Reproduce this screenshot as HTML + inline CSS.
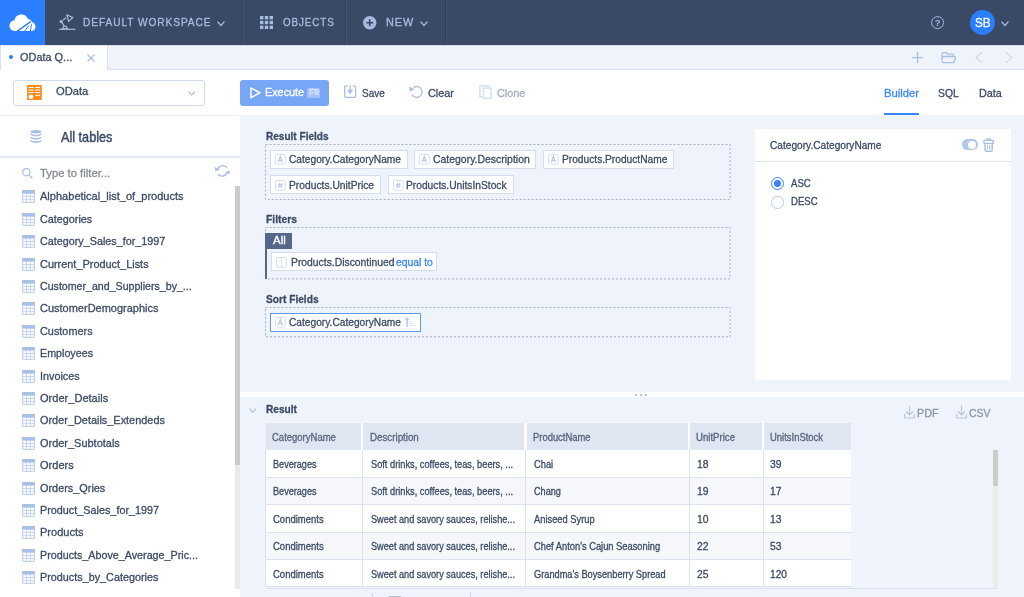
<!DOCTYPE html>
<html><head><meta charset="utf-8"><style>
html,body{margin:0;padding:0;width:1024px;height:597px;overflow:hidden;background:#fff;font-family:"Liberation Sans", sans-serif}
.t{position:absolute;white-space:nowrap;line-height:1;-webkit-font-smoothing:antialiased;-webkit-text-stroke-width:0.3px}
body{will-change:transform}
svg{overflow:visible}
</style></head><body>
<div style="position:absolute;left:0px;top:40px;width:1024.00px;height:31.00px;background:#eff3fa"></div>
<div style="position:absolute;left:0px;top:0px;width:1024.00px;height:44.80px;background:#3a4a66;box-shadow:0 0.6px 1.2px rgba(20,30,50,0.35)"></div>
<div style="position:absolute;left:0px;top:0px;width:44.80px;height:44.80px;background:#2b7fff"></div>
<svg style="position:absolute;left:9px;top:13px" width="28" height="20" viewBox="0 0 28 20"><path d="M6 18 C2 18 0.5 15 0.5 12.5 C0.5 9.5 3 7.5 5.5 7.5 C6 3.5 9 1.5 12.5 1.5 C15.5 1.5 18 3.5 19 6 C21 6 22.5 7.5 23 9 C25 9.5 26.5 11.5 26.5 14 C26.5 16.5 24.5 18 22.5 18 Z" fill="#fff"/><path d="M7.6 18.6 L21.8 8.6" stroke="#2b7fff" stroke-width="1.3"/><path d="M15.2 18.6 L19.8 12.6" stroke="#2b7fff" stroke-width="1"/><path d="M21.3 18.6 L22.6 11.2" stroke="#2b7fff" stroke-width="1"/></svg>
<div style="position:absolute;left:242.2px;top:0px;width:1.00px;height:44.80px;background:#34435c"></div>
<div style="position:absolute;left:243.2px;top:0px;width:1.00px;height:44.80px;background:#44536d"></div>
<div style="position:absolute;left:345.3px;top:0px;width:1.00px;height:44.80px;background:#34435c"></div>
<div style="position:absolute;left:346.3px;top:0px;width:1.00px;height:44.80px;background:#44536d"></div>
<div style="position:absolute;left:445.2px;top:0px;width:1.00px;height:44.80px;background:#34435c"></div>
<div style="position:absolute;left:446.2px;top:0px;width:1.00px;height:44.80px;background:#44536d"></div>
<svg style="position:absolute;left:58px;top:12px" width="19" height="19" viewBox="0 0 19 19"><g fill="none" stroke="#a6bbdf" stroke-width="1.2" stroke-linejoin="round"><path d="M0.9 17.3 H17.3"/><path d="M4.6 16.8 L5.8 14.2 H8.2 L9.4 16.8 Z"/><path d="M3.6 10 L6.2 13.8"/><path d="M5 7.9 L8 5.8"/><path d="M8.8 2.8 L14.8 5.6 L10.6 9.4 Z"/></g><circle cx="3.3" cy="9.6" r="1.7" fill="#a6bbdf"/></svg>
<div class="t" id="t0" style="left:83.4px;top:16.71px;font-size:11.8px;color:#a6bbdf;font-weight:normal;letter-spacing:1.100px;-webkit-text-stroke:0.35px #a6bbdf;transform:scaleX(0.8578);transform-origin:0 0">DEFAULT WORKSPACE</div>
<svg style="position:absolute;left:217px;top:20.5px" width="8" height="5.5" viewBox="0 0 8 5.5"><path d="M0.6 0.6 L4.0 4.5 L7.4 0.6" fill="none" stroke="#a6bbdf" stroke-width="1.3"/></svg>
<svg style="position:absolute;left:260px;top:15.7px" width="14" height="14" viewBox="0 0 14 14"><rect x="0.0" y="0.0" width="3.4" height="3.4" fill="#a6bbdf"/><rect x="0.0" y="4.8" width="3.4" height="3.4" fill="#a6bbdf"/><rect x="0.0" y="9.6" width="3.4" height="3.4" fill="#a6bbdf"/><rect x="4.8" y="0.0" width="3.4" height="3.4" fill="#a6bbdf"/><rect x="4.8" y="4.8" width="3.4" height="3.4" fill="#a6bbdf"/><rect x="4.8" y="9.6" width="3.4" height="3.4" fill="#a6bbdf"/><rect x="9.6" y="0.0" width="3.4" height="3.4" fill="#a6bbdf"/><rect x="9.6" y="4.8" width="3.4" height="3.4" fill="#a6bbdf"/><rect x="9.6" y="9.6" width="3.4" height="3.4" fill="#a6bbdf"/></svg>
<div class="t" id="t1" style="left:283px;top:16.71px;font-size:11.8px;color:#a6bbdf;font-weight:normal;letter-spacing:1.100px;-webkit-text-stroke:0.35px #a6bbdf;transform:scaleX(0.8316);transform-origin:0 0">OBJECTS</div>
<svg style="position:absolute;left:362.9px;top:16.4px" width="14" height="14" viewBox="0 0 14 14"><circle cx="6.75" cy="6.75" r="6.75" fill="#a6bbdf"/><path d="M6.75 3.3 V10.2 M3.3 6.75 H10.2" stroke="#3a4a66" stroke-width="1.6"/></svg>
<div class="t" id="t2" style="left:386px;top:16.71px;font-size:11.8px;color:#a6bbdf;font-weight:normal;letter-spacing:1.100px;-webkit-text-stroke:0.35px #a6bbdf;transform:scaleX(0.9206);transform-origin:0 0">NEW</div>
<svg style="position:absolute;left:420px;top:20.5px" width="8" height="5.5" viewBox="0 0 8 5.5"><path d="M0.6 0.6 L4.0 4.5 L7.4 0.6" fill="none" stroke="#a6bbdf" stroke-width="1.3"/></svg>
<svg style="position:absolute;left:931px;top:15.7px" width="14" height="14" viewBox="0 0 14 14"><circle cx="6.6" cy="6.6" r="6" fill="none" stroke="#a6bbdf" stroke-width="1"/><text x="6.6" y="10.2" font-size="9.5" font-weight="bold" text-anchor="middle" fill="#a6bbdf" font-family="Liberation Sans">?</text></svg>
<div style="position:absolute;left:969.8px;top:9.6px;width:25.4px;height:25.4px;border-radius:50%;background:#2b7fff"></div>
<div class="t" id="t3" style="left:974.6px;top:15.60px;font-size:13px;color:#fff;font-weight:normal;letter-spacing:0.000px;;transform:scaleX(0.9034);transform-origin:0 0">SB</div>
<svg style="position:absolute;left:1001px;top:20.8px" width="8" height="5.5" viewBox="0 0 8 5.5"><path d="M0.6 0.6 L4.0 4.5 L7.4 0.6" fill="none" stroke="#a6bbdf" stroke-width="1.3"/></svg>
<div style="position:absolute;left:0px;top:44.8px;width:1024.00px;height:25.60px;background:#eff3fa"></div>
<div style="position:absolute;left:0px;top:69px;width:1024.00px;height:1.40px;background:#d8e2f2"></div>
<div style="position:absolute;left:0px;top:44.8px;width:108.00px;height:25.80px;background:#fff;border-left:1px solid #d8e2f2;box-sizing:border-box;border-right:1.2px solid #d8e2f2"></div>
<div style="position:absolute;left:0px;top:44.8px;width:1024.00px;height:1.20px;background:linear-gradient(rgba(40,55,80,0.25),rgba(40,55,80,0))"></div>
<div style="position:absolute;left:8.8px;top:55.3px;width:4px;height:4px;border-radius:50%;background:#2b7fff"></div>
<div class="t" id="t4" style="left:20.2px;top:52.22px;font-size:11.2px;color:#3c4b66;font-weight:normal;letter-spacing:0.000px;;transform:scaleX(0.9763);transform-origin:0 0">OData Q...</div>
<svg style="position:absolute;left:86.5px;top:53.7px" width="8" height="8" viewBox="0 0 8 8"><path d="M0.5 0.5 L7.5 7.5 M7.5 0.5 L0.5 7.5" stroke="#a9bfe3" stroke-width="1.2"/></svg>
<svg style="position:absolute;left:911.9px;top:51.9px" width="11.2" height="11.2" viewBox="0 0 11.2 11.2"><path d="M5.6 0 V11.2 M0 5.6 H11.2" stroke="#a9bfe3" stroke-width="1.3"/></svg>
<svg style="position:absolute;left:940.9px;top:52px" width="15" height="11.5" viewBox="0 0 15 11.5"><path d="M1 2 Q1 0.7 2.3 0.7 H5.5 L7 2.2 H11.5 Q12.7 2.2 12.7 3.4 V4.5 M1 2 V9.5 Q1 10.7 2.3 10.7 H11.8 Q13 10.7 13.3 9.5 L14.3 5.7 Q14.4 4.5 13.2 4.5 H2.8 Q1.8 4.5 1.5 5.5" fill="none" stroke="#a9bfe3" stroke-width="1.3"/></svg>
<svg style="position:absolute;left:974.5px;top:51.9px" width="8" height="11.5" viewBox="0 0 8 11.5"><path d="M7 0.5 L1 5.6 L7 10.7" fill="none" stroke="#cbd7ec" stroke-width="1.1"/></svg>
<svg style="position:absolute;left:1005px;top:51.9px" width="8" height="11.5" viewBox="0 0 8 11.5"><path d="M1 0.5 L7 5.6 L1 10.7" fill="none" stroke="#cbd7ec" stroke-width="1.1"/></svg>
<div style="position:absolute;left:0px;top:70.4px;width:1024.00px;height:44.50px;background:#fff"></div>
<div style="position:absolute;left:12.9px;top:80.1px;width:191.70px;height:25.50px;border:1px solid #cfdaec;border-radius:3px;box-sizing:border-box;background:#fff"></div>
<svg style="position:absolute;left:27px;top:85px" width="14.8" height="15" viewBox="0 0 14.8 15"><rect x="0" y="0" width="14.8" height="15" fill="#ff8d1c"/><g stroke="#fff" stroke-width="1.05"><path d="M1.5 2.4 H6.75 M8.06 2.4 H13.07 M1.5 5 H6.75 M8.06 5 H13.07 M1.5 7.6 H6.75 M8.06 7.6 H13.07 M8.06 10.2 H13.07"/></g><circle cx="3.9" cy="11.8" r="2.4" fill="#fff"/><path d="M7.4 0 V15 M0 8.9 H14.8" stroke="#ff8d1c" stroke-width="0.6"/></svg>
<div class="t" id="t5" style="left:55.5px;top:86.32px;font-size:11.2px;color:#3c4b66;font-weight:normal;letter-spacing:0.000px;;transform:scaleX(0.9986);transform-origin:0 0">OData</div>
<svg style="position:absolute;left:187.5px;top:91px" width="7.5" height="5" viewBox="0 0 7.5 5"><path d="M0.6 0.6 L3.75 4 L6.9 0.6" fill="none" stroke="#a9bcdc" stroke-width="1.1"/></svg>
<div style="position:absolute;left:240px;top:80px;width:89.1px;height:25.7px;border-radius:3px;background:#78a6f7"></div>
<svg style="position:absolute;left:249.9px;top:87.3px" width="11" height="11.5" viewBox="0 0 11 11.5"><path d="M0.9 0.9 L9.9 5.75 L0.9 10.6 Z" fill="none" stroke="#fff" stroke-width="1.5" stroke-linejoin="round"/></svg>
<div class="t" id="t6" style="left:265.2px;top:87.42px;font-size:11.2px;color:#fff;font-weight:normal;letter-spacing:0.000px;;transform:scaleX(0.9669);transform-origin:0 0">Execute</div>
<div style="position:absolute;left:307.1px;top:87.9px;width:12.9px;height:9.7px;background:#a2c1fa;border-radius:1.5px"></div>
<div class="t" id="t7" style="left:309px;top:88.28px;font-size:9px;color:#d2e2fd;font-weight:bold;letter-spacing:0.000px;;transform:scaleX(0.9688);transform-origin:0 0">F9</div>
<svg style="position:absolute;left:344.2px;top:85.3px" width="13" height="13" viewBox="0 0 13 13"><path d="M3.6 0.9 H1.8 Q0.7 0.9 0.7 2 V11.3 Q0.7 12.4 1.8 12.4 H10.5 Q11.6 12.4 11.6 11.3 V2 Q11.6 0.9 10.5 0.9 H8.7" fill="none" stroke="#a9bfe3" stroke-width="1.3"/><path d="M6.1 0 V6" stroke="#a9bfe3" stroke-width="1.3"/><path d="M3 4.8 H9.2 L6.1 9.6 Z" fill="#a9bfe3"/></svg>
<div class="t" id="t8" style="left:362px;top:87.52px;font-size:11.2px;color:#3c4b66;font-weight:normal;letter-spacing:0.000px;;transform:scaleX(0.8924);transform-origin:0 0">Save</div>
<svg style="position:absolute;left:409px;top:84px" width="15" height="15" viewBox="0 0 15 15"><path d="M4.6 3.5 A5.4 5.4 0 1 1 3.0 10.6" fill="none" stroke="#a9bfe3" stroke-width="1.3"/><path d="M0.7 2.9 L0.9 7.2 L5 5.2 Z" fill="#a9bfe3" stroke="#a9bfe3" stroke-width="0.5" stroke-linejoin="round"/></svg>
<div class="t" id="t9" style="left:428px;top:87.52px;font-size:11.2px;color:#3c4b66;font-weight:normal;letter-spacing:0.000px;;transform:scaleX(0.9721);transform-origin:0 0">Clear</div>
<svg style="position:absolute;left:479px;top:84.8px" width="14" height="15" viewBox="0 0 14 15"><path d="M3.9 11.6 H0.9 V0.9 H9.2 V2.9" fill="none" stroke="#d3def0" stroke-width="1.4"/><rect x="4.4" y="3.1" width="7.7" height="10.2" fill="#fff" stroke="#d3def0" stroke-width="1.4"/></svg>
<div class="t" id="t10" style="left:497.1px;top:87.52px;font-size:11.2px;color:#a3adbf;font-weight:normal;letter-spacing:0.000px;;transform:scaleX(0.9713);transform-origin:0 0">Clone</div>
<div class="t" id="t11" style="left:884.3px;top:88.12px;font-size:11.2px;color:#3b86f5;font-weight:normal;letter-spacing:0.000px;;transform:scaleX(1.0051);transform-origin:0 0">Builder</div>
<div style="position:absolute;left:884px;top:113.3px;width:35.00px;height:2.00px;background:#3b86f5"></div>
<div class="t" id="t12" style="left:938.4px;top:88.12px;font-size:11.2px;color:#3c4b66;font-weight:normal;letter-spacing:0.000px;;transform:scaleX(0.9235);transform-origin:0 0">SQL</div>
<div class="t" id="t13" style="left:978.6px;top:88.12px;font-size:11.2px;color:#3c4b66;font-weight:normal;letter-spacing:0.000px;;transform:scaleX(0.9684);transform-origin:0 0">Data</div>
<div style="position:absolute;left:240px;top:114.9px;width:784.00px;height:482.10px;background:#eff3fb"></div>
<div style="position:absolute;left:0px;top:114.9px;width:240.00px;height:482.10px;background:#fff"></div>
<div style="position:absolute;left:0px;top:114.9px;width:240.00px;height:1.00px;background:#edf1f7"></div>
<svg style="position:absolute;left:29.6px;top:129.8px" width="12" height="14" viewBox="0 0 12 14"><g fill="#a9bfe3"><ellipse cx="5.9" cy="1.8" rx="5.6" ry="1.7"/><path d="M0.3 3.5 Q5.9 6.3 11.5 3.5 V5.1 Q5.9 7.9 0.3 5.1 Z"/><path d="M0.3 6.7 Q5.9 9.5 11.5 6.7 V8.3 Q5.9 11.1 0.3 8.3 Z"/><path d="M0.3 9.9 Q5.9 12.7 11.5 9.9 V11.5 Q5.9 14.3 0.3 11.5 Z"/></g></svg>
<div class="t" id="t14" style="left:61px;top:129.71px;font-size:14.4px;color:#3c4b66;font-weight:normal;letter-spacing:0.000px;-webkit-text-stroke-width:0.45px;transform:scaleX(0.8792);transform-origin:0 0">All tables</div>
<div style="position:absolute;left:0px;top:156.3px;width:240.00px;height:1.50px;background:#e3e9f3"></div>
<svg style="position:absolute;left:22px;top:168px" width="11" height="11" viewBox="0 0 11 11"><circle cx="4.3" cy="4.3" r="3.6" fill="none" stroke="#a9bfe3" stroke-width="1.2"/><path d="M7 7 L10.3 10.3" stroke="#a9bfe3" stroke-width="1.3"/></svg>
<div class="t" id="t15" style="left:40.2px;top:168.32px;font-size:11.2px;color:#868b94;font-weight:normal;letter-spacing:0.000px;;transform:scaleX(1.0080);transform-origin:0 0">Type to filter...</div>
<svg style="position:absolute;left:213px;top:162px" width="19" height="17" viewBox="0 0 19 17"><g fill="none" stroke="#a9bfe3" stroke-width="1.4"><path d="M13.9 5.6 A5.3 5.3 0 0 0 4.6 7.9"/><path d="M5 12.3 A5.3 5.3 0 0 0 14.1 10.2"/></g><g fill="#a9bfe3"><path d="M2 5 L2.3 9.8 L6.4 7.6 Z"/><path d="M12.3 10.9 L16.6 8.1 L16.8 12.1 Z"/></g></svg>
<svg style="position:absolute;left:22.3px;top:190.3px" width="13" height="13" viewBox="0 0 13 13"><rect x="0" y="0" width="13" height="13" rx="1.5" fill="#c2d3ef"/><rect x="0" y="0" width="13" height="3" rx="1" fill="#a9c0e6"/><rect x="1.2" y="4.0" width="2.8" height="2" fill="#fff"/><rect x="1.2" y="6.9" width="2.8" height="2" fill="#fff"/><rect x="1.2" y="9.8" width="2.8" height="2" fill="#fff"/><rect x="5.0" y="4.0" width="2.8" height="2" fill="#fff"/><rect x="5.0" y="6.9" width="2.8" height="2" fill="#fff"/><rect x="5.0" y="9.8" width="2.8" height="2" fill="#fff"/><rect x="8.799999999999999" y="4.0" width="2.8" height="2" fill="#fff"/><rect x="8.799999999999999" y="6.9" width="2.8" height="2" fill="#fff"/><rect x="8.799999999999999" y="9.8" width="2.8" height="2" fill="#fff"/></svg>
<div class="t" id="t16" style="left:40.2px;top:191.32px;font-size:11.2px;color:#3c4b66;font-weight:normal;letter-spacing:0.000px;;transform:scaleX(0.9868);transform-origin:0 0">Alphabetical_list_of_products</div>
<svg style="position:absolute;left:22.3px;top:212.70000000000002px" width="13" height="13" viewBox="0 0 13 13"><rect x="0" y="0" width="13" height="13" rx="1.5" fill="#c2d3ef"/><rect x="0" y="0" width="13" height="3" rx="1" fill="#a9c0e6"/><rect x="1.2" y="4.0" width="2.8" height="2" fill="#fff"/><rect x="1.2" y="6.9" width="2.8" height="2" fill="#fff"/><rect x="1.2" y="9.8" width="2.8" height="2" fill="#fff"/><rect x="5.0" y="4.0" width="2.8" height="2" fill="#fff"/><rect x="5.0" y="6.9" width="2.8" height="2" fill="#fff"/><rect x="5.0" y="9.8" width="2.8" height="2" fill="#fff"/><rect x="8.799999999999999" y="4.0" width="2.8" height="2" fill="#fff"/><rect x="8.799999999999999" y="6.9" width="2.8" height="2" fill="#fff"/><rect x="8.799999999999999" y="9.8" width="2.8" height="2" fill="#fff"/></svg>
<div class="t" id="t17" style="left:40.2px;top:213.72px;font-size:11.2px;color:#3c4b66;font-weight:normal;letter-spacing:0.000px;;transform:scaleX(0.9647);transform-origin:0 0">Categories</div>
<svg style="position:absolute;left:22.3px;top:235.10000000000002px" width="13" height="13" viewBox="0 0 13 13"><rect x="0" y="0" width="13" height="13" rx="1.5" fill="#c2d3ef"/><rect x="0" y="0" width="13" height="3" rx="1" fill="#a9c0e6"/><rect x="1.2" y="4.0" width="2.8" height="2" fill="#fff"/><rect x="1.2" y="6.9" width="2.8" height="2" fill="#fff"/><rect x="1.2" y="9.8" width="2.8" height="2" fill="#fff"/><rect x="5.0" y="4.0" width="2.8" height="2" fill="#fff"/><rect x="5.0" y="6.9" width="2.8" height="2" fill="#fff"/><rect x="5.0" y="9.8" width="2.8" height="2" fill="#fff"/><rect x="8.799999999999999" y="4.0" width="2.8" height="2" fill="#fff"/><rect x="8.799999999999999" y="6.9" width="2.8" height="2" fill="#fff"/><rect x="8.799999999999999" y="9.8" width="2.8" height="2" fill="#fff"/></svg>
<div class="t" id="t18" style="left:40.2px;top:236.12px;font-size:11.2px;color:#3c4b66;font-weight:normal;letter-spacing:0.000px;;transform:scaleX(0.9631);transform-origin:0 0">Category_Sales_for_1997</div>
<svg style="position:absolute;left:22.3px;top:257.5px" width="13" height="13" viewBox="0 0 13 13"><rect x="0" y="0" width="13" height="13" rx="1.5" fill="#c2d3ef"/><rect x="0" y="0" width="13" height="3" rx="1" fill="#a9c0e6"/><rect x="1.2" y="4.0" width="2.8" height="2" fill="#fff"/><rect x="1.2" y="6.9" width="2.8" height="2" fill="#fff"/><rect x="1.2" y="9.8" width="2.8" height="2" fill="#fff"/><rect x="5.0" y="4.0" width="2.8" height="2" fill="#fff"/><rect x="5.0" y="6.9" width="2.8" height="2" fill="#fff"/><rect x="5.0" y="9.8" width="2.8" height="2" fill="#fff"/><rect x="8.799999999999999" y="4.0" width="2.8" height="2" fill="#fff"/><rect x="8.799999999999999" y="6.9" width="2.8" height="2" fill="#fff"/><rect x="8.799999999999999" y="9.8" width="2.8" height="2" fill="#fff"/></svg>
<div class="t" id="t19" style="left:40.2px;top:258.52px;font-size:11.2px;color:#3c4b66;font-weight:normal;letter-spacing:0.000px;;transform:scaleX(0.9757);transform-origin:0 0">Current_Product_Lists</div>
<svg style="position:absolute;left:22.3px;top:279.9px" width="13" height="13" viewBox="0 0 13 13"><rect x="0" y="0" width="13" height="13" rx="1.5" fill="#c2d3ef"/><rect x="0" y="0" width="13" height="3" rx="1" fill="#a9c0e6"/><rect x="1.2" y="4.0" width="2.8" height="2" fill="#fff"/><rect x="1.2" y="6.9" width="2.8" height="2" fill="#fff"/><rect x="1.2" y="9.8" width="2.8" height="2" fill="#fff"/><rect x="5.0" y="4.0" width="2.8" height="2" fill="#fff"/><rect x="5.0" y="6.9" width="2.8" height="2" fill="#fff"/><rect x="5.0" y="9.8" width="2.8" height="2" fill="#fff"/><rect x="8.799999999999999" y="4.0" width="2.8" height="2" fill="#fff"/><rect x="8.799999999999999" y="6.9" width="2.8" height="2" fill="#fff"/><rect x="8.799999999999999" y="9.8" width="2.8" height="2" fill="#fff"/></svg>
<div class="t" id="t20" style="left:40.2px;top:280.92px;font-size:11.2px;color:#3c4b66;font-weight:normal;letter-spacing:0.000px;;transform:scaleX(0.9491);transform-origin:0 0">Customer_and_Suppliers_by_...</div>
<svg style="position:absolute;left:22.3px;top:302.3px" width="13" height="13" viewBox="0 0 13 13"><rect x="0" y="0" width="13" height="13" rx="1.5" fill="#c2d3ef"/><rect x="0" y="0" width="13" height="3" rx="1" fill="#a9c0e6"/><rect x="1.2" y="4.0" width="2.8" height="2" fill="#fff"/><rect x="1.2" y="6.9" width="2.8" height="2" fill="#fff"/><rect x="1.2" y="9.8" width="2.8" height="2" fill="#fff"/><rect x="5.0" y="4.0" width="2.8" height="2" fill="#fff"/><rect x="5.0" y="6.9" width="2.8" height="2" fill="#fff"/><rect x="5.0" y="9.8" width="2.8" height="2" fill="#fff"/><rect x="8.799999999999999" y="4.0" width="2.8" height="2" fill="#fff"/><rect x="8.799999999999999" y="6.9" width="2.8" height="2" fill="#fff"/><rect x="8.799999999999999" y="9.8" width="2.8" height="2" fill="#fff"/></svg>
<div class="t" id="t21" style="left:40.2px;top:303.32px;font-size:11.2px;color:#3c4b66;font-weight:normal;letter-spacing:0.000px;;transform:scaleX(0.9824);transform-origin:0 0">CustomerDemographics</div>
<svg style="position:absolute;left:22.3px;top:324.7px" width="13" height="13" viewBox="0 0 13 13"><rect x="0" y="0" width="13" height="13" rx="1.5" fill="#c2d3ef"/><rect x="0" y="0" width="13" height="3" rx="1" fill="#a9c0e6"/><rect x="1.2" y="4.0" width="2.8" height="2" fill="#fff"/><rect x="1.2" y="6.9" width="2.8" height="2" fill="#fff"/><rect x="1.2" y="9.8" width="2.8" height="2" fill="#fff"/><rect x="5.0" y="4.0" width="2.8" height="2" fill="#fff"/><rect x="5.0" y="6.9" width="2.8" height="2" fill="#fff"/><rect x="5.0" y="9.8" width="2.8" height="2" fill="#fff"/><rect x="8.799999999999999" y="4.0" width="2.8" height="2" fill="#fff"/><rect x="8.799999999999999" y="6.9" width="2.8" height="2" fill="#fff"/><rect x="8.799999999999999" y="9.8" width="2.8" height="2" fill="#fff"/></svg>
<div class="t" id="t22" style="left:40.2px;top:325.72px;font-size:11.2px;color:#3c4b66;font-weight:normal;letter-spacing:0.000px;;transform:scaleX(0.9724);transform-origin:0 0">Customers</div>
<svg style="position:absolute;left:22.3px;top:347.1px" width="13" height="13" viewBox="0 0 13 13"><rect x="0" y="0" width="13" height="13" rx="1.5" fill="#c2d3ef"/><rect x="0" y="0" width="13" height="3" rx="1" fill="#a9c0e6"/><rect x="1.2" y="4.0" width="2.8" height="2" fill="#fff"/><rect x="1.2" y="6.9" width="2.8" height="2" fill="#fff"/><rect x="1.2" y="9.8" width="2.8" height="2" fill="#fff"/><rect x="5.0" y="4.0" width="2.8" height="2" fill="#fff"/><rect x="5.0" y="6.9" width="2.8" height="2" fill="#fff"/><rect x="5.0" y="9.8" width="2.8" height="2" fill="#fff"/><rect x="8.799999999999999" y="4.0" width="2.8" height="2" fill="#fff"/><rect x="8.799999999999999" y="6.9" width="2.8" height="2" fill="#fff"/><rect x="8.799999999999999" y="9.8" width="2.8" height="2" fill="#fff"/></svg>
<div class="t" id="t23" style="left:40.2px;top:348.12px;font-size:11.2px;color:#3c4b66;font-weight:normal;letter-spacing:0.000px;;transform:scaleX(0.9576);transform-origin:0 0">Employees</div>
<svg style="position:absolute;left:22.3px;top:369.5px" width="13" height="13" viewBox="0 0 13 13"><rect x="0" y="0" width="13" height="13" rx="1.5" fill="#c2d3ef"/><rect x="0" y="0" width="13" height="3" rx="1" fill="#a9c0e6"/><rect x="1.2" y="4.0" width="2.8" height="2" fill="#fff"/><rect x="1.2" y="6.9" width="2.8" height="2" fill="#fff"/><rect x="1.2" y="9.8" width="2.8" height="2" fill="#fff"/><rect x="5.0" y="4.0" width="2.8" height="2" fill="#fff"/><rect x="5.0" y="6.9" width="2.8" height="2" fill="#fff"/><rect x="5.0" y="9.8" width="2.8" height="2" fill="#fff"/><rect x="8.799999999999999" y="4.0" width="2.8" height="2" fill="#fff"/><rect x="8.799999999999999" y="6.9" width="2.8" height="2" fill="#fff"/><rect x="8.799999999999999" y="9.8" width="2.8" height="2" fill="#fff"/></svg>
<div class="t" id="t24" style="left:40.2px;top:370.52px;font-size:11.2px;color:#3c4b66;font-weight:normal;letter-spacing:0.000px;;transform:scaleX(0.9672);transform-origin:0 0">Invoices</div>
<svg style="position:absolute;left:22.3px;top:391.9px" width="13" height="13" viewBox="0 0 13 13"><rect x="0" y="0" width="13" height="13" rx="1.5" fill="#c2d3ef"/><rect x="0" y="0" width="13" height="3" rx="1" fill="#a9c0e6"/><rect x="1.2" y="4.0" width="2.8" height="2" fill="#fff"/><rect x="1.2" y="6.9" width="2.8" height="2" fill="#fff"/><rect x="1.2" y="9.8" width="2.8" height="2" fill="#fff"/><rect x="5.0" y="4.0" width="2.8" height="2" fill="#fff"/><rect x="5.0" y="6.9" width="2.8" height="2" fill="#fff"/><rect x="5.0" y="9.8" width="2.8" height="2" fill="#fff"/><rect x="8.799999999999999" y="4.0" width="2.8" height="2" fill="#fff"/><rect x="8.799999999999999" y="6.9" width="2.8" height="2" fill="#fff"/><rect x="8.799999999999999" y="9.8" width="2.8" height="2" fill="#fff"/></svg>
<div class="t" id="t25" style="left:40.2px;top:392.92px;font-size:11.2px;color:#3c4b66;font-weight:normal;letter-spacing:0.000px;;transform:scaleX(0.9883);transform-origin:0 0">Order_Details</div>
<svg style="position:absolute;left:22.3px;top:414.3px" width="13" height="13" viewBox="0 0 13 13"><rect x="0" y="0" width="13" height="13" rx="1.5" fill="#c2d3ef"/><rect x="0" y="0" width="13" height="3" rx="1" fill="#a9c0e6"/><rect x="1.2" y="4.0" width="2.8" height="2" fill="#fff"/><rect x="1.2" y="6.9" width="2.8" height="2" fill="#fff"/><rect x="1.2" y="9.8" width="2.8" height="2" fill="#fff"/><rect x="5.0" y="4.0" width="2.8" height="2" fill="#fff"/><rect x="5.0" y="6.9" width="2.8" height="2" fill="#fff"/><rect x="5.0" y="9.8" width="2.8" height="2" fill="#fff"/><rect x="8.799999999999999" y="4.0" width="2.8" height="2" fill="#fff"/><rect x="8.799999999999999" y="6.9" width="2.8" height="2" fill="#fff"/><rect x="8.799999999999999" y="9.8" width="2.8" height="2" fill="#fff"/></svg>
<div class="t" id="t26" style="left:40.2px;top:415.32px;font-size:11.2px;color:#3c4b66;font-weight:normal;letter-spacing:0.000px;;transform:scaleX(0.9750);transform-origin:0 0">Order_Details_Extendeds</div>
<svg style="position:absolute;left:22.3px;top:436.7px" width="13" height="13" viewBox="0 0 13 13"><rect x="0" y="0" width="13" height="13" rx="1.5" fill="#c2d3ef"/><rect x="0" y="0" width="13" height="3" rx="1" fill="#a9c0e6"/><rect x="1.2" y="4.0" width="2.8" height="2" fill="#fff"/><rect x="1.2" y="6.9" width="2.8" height="2" fill="#fff"/><rect x="1.2" y="9.8" width="2.8" height="2" fill="#fff"/><rect x="5.0" y="4.0" width="2.8" height="2" fill="#fff"/><rect x="5.0" y="6.9" width="2.8" height="2" fill="#fff"/><rect x="5.0" y="9.8" width="2.8" height="2" fill="#fff"/><rect x="8.799999999999999" y="4.0" width="2.8" height="2" fill="#fff"/><rect x="8.799999999999999" y="6.9" width="2.8" height="2" fill="#fff"/><rect x="8.799999999999999" y="9.8" width="2.8" height="2" fill="#fff"/></svg>
<div class="t" id="t27" style="left:40.2px;top:437.72px;font-size:11.2px;color:#3c4b66;font-weight:normal;letter-spacing:0.000px;;transform:scaleX(0.9796);transform-origin:0 0">Order_Subtotals</div>
<svg style="position:absolute;left:22.3px;top:459.09999999999997px" width="13" height="13" viewBox="0 0 13 13"><rect x="0" y="0" width="13" height="13" rx="1.5" fill="#c2d3ef"/><rect x="0" y="0" width="13" height="3" rx="1" fill="#a9c0e6"/><rect x="1.2" y="4.0" width="2.8" height="2" fill="#fff"/><rect x="1.2" y="6.9" width="2.8" height="2" fill="#fff"/><rect x="1.2" y="9.8" width="2.8" height="2" fill="#fff"/><rect x="5.0" y="4.0" width="2.8" height="2" fill="#fff"/><rect x="5.0" y="6.9" width="2.8" height="2" fill="#fff"/><rect x="5.0" y="9.8" width="2.8" height="2" fill="#fff"/><rect x="8.799999999999999" y="4.0" width="2.8" height="2" fill="#fff"/><rect x="8.799999999999999" y="6.9" width="2.8" height="2" fill="#fff"/><rect x="8.799999999999999" y="9.8" width="2.8" height="2" fill="#fff"/></svg>
<div class="t" id="t28" style="left:40.2px;top:460.12px;font-size:11.2px;color:#3c4b66;font-weight:normal;letter-spacing:0.000px;;transform:scaleX(0.9855);transform-origin:0 0">Orders</div>
<svg style="position:absolute;left:22.3px;top:481.5px" width="13" height="13" viewBox="0 0 13 13"><rect x="0" y="0" width="13" height="13" rx="1.5" fill="#c2d3ef"/><rect x="0" y="0" width="13" height="3" rx="1" fill="#a9c0e6"/><rect x="1.2" y="4.0" width="2.8" height="2" fill="#fff"/><rect x="1.2" y="6.9" width="2.8" height="2" fill="#fff"/><rect x="1.2" y="9.8" width="2.8" height="2" fill="#fff"/><rect x="5.0" y="4.0" width="2.8" height="2" fill="#fff"/><rect x="5.0" y="6.9" width="2.8" height="2" fill="#fff"/><rect x="5.0" y="9.8" width="2.8" height="2" fill="#fff"/><rect x="8.799999999999999" y="4.0" width="2.8" height="2" fill="#fff"/><rect x="8.799999999999999" y="6.9" width="2.8" height="2" fill="#fff"/><rect x="8.799999999999999" y="9.8" width="2.8" height="2" fill="#fff"/></svg>
<div class="t" id="t29" style="left:40.2px;top:482.52px;font-size:11.2px;color:#3c4b66;font-weight:normal;letter-spacing:0.000px;;transform:scaleX(0.9724);transform-origin:0 0">Orders_Qries</div>
<svg style="position:absolute;left:22.3px;top:503.9px" width="13" height="13" viewBox="0 0 13 13"><rect x="0" y="0" width="13" height="13" rx="1.5" fill="#c2d3ef"/><rect x="0" y="0" width="13" height="3" rx="1" fill="#a9c0e6"/><rect x="1.2" y="4.0" width="2.8" height="2" fill="#fff"/><rect x="1.2" y="6.9" width="2.8" height="2" fill="#fff"/><rect x="1.2" y="9.8" width="2.8" height="2" fill="#fff"/><rect x="5.0" y="4.0" width="2.8" height="2" fill="#fff"/><rect x="5.0" y="6.9" width="2.8" height="2" fill="#fff"/><rect x="5.0" y="9.8" width="2.8" height="2" fill="#fff"/><rect x="8.799999999999999" y="4.0" width="2.8" height="2" fill="#fff"/><rect x="8.799999999999999" y="6.9" width="2.8" height="2" fill="#fff"/><rect x="8.799999999999999" y="9.8" width="2.8" height="2" fill="#fff"/></svg>
<div class="t" id="t30" style="left:40.2px;top:504.92px;font-size:11.2px;color:#3c4b66;font-weight:normal;letter-spacing:0.000px;;transform:scaleX(0.9671);transform-origin:0 0">Product_Sales_for_1997</div>
<svg style="position:absolute;left:22.3px;top:526.3px" width="13" height="13" viewBox="0 0 13 13"><rect x="0" y="0" width="13" height="13" rx="1.5" fill="#c2d3ef"/><rect x="0" y="0" width="13" height="3" rx="1" fill="#a9c0e6"/><rect x="1.2" y="4.0" width="2.8" height="2" fill="#fff"/><rect x="1.2" y="6.9" width="2.8" height="2" fill="#fff"/><rect x="1.2" y="9.8" width="2.8" height="2" fill="#fff"/><rect x="5.0" y="4.0" width="2.8" height="2" fill="#fff"/><rect x="5.0" y="6.9" width="2.8" height="2" fill="#fff"/><rect x="5.0" y="9.8" width="2.8" height="2" fill="#fff"/><rect x="8.799999999999999" y="4.0" width="2.8" height="2" fill="#fff"/><rect x="8.799999999999999" y="6.9" width="2.8" height="2" fill="#fff"/><rect x="8.799999999999999" y="9.8" width="2.8" height="2" fill="#fff"/></svg>
<div class="t" id="t31" style="left:40.2px;top:527.32px;font-size:11.2px;color:#3c4b66;font-weight:normal;letter-spacing:0.000px;;transform:scaleX(0.9853);transform-origin:0 0">Products</div>
<svg style="position:absolute;left:22.3px;top:548.7px" width="13" height="13" viewBox="0 0 13 13"><rect x="0" y="0" width="13" height="13" rx="1.5" fill="#c2d3ef"/><rect x="0" y="0" width="13" height="3" rx="1" fill="#a9c0e6"/><rect x="1.2" y="4.0" width="2.8" height="2" fill="#fff"/><rect x="1.2" y="6.9" width="2.8" height="2" fill="#fff"/><rect x="1.2" y="9.8" width="2.8" height="2" fill="#fff"/><rect x="5.0" y="4.0" width="2.8" height="2" fill="#fff"/><rect x="5.0" y="6.9" width="2.8" height="2" fill="#fff"/><rect x="5.0" y="9.8" width="2.8" height="2" fill="#fff"/><rect x="8.799999999999999" y="4.0" width="2.8" height="2" fill="#fff"/><rect x="8.799999999999999" y="6.9" width="2.8" height="2" fill="#fff"/><rect x="8.799999999999999" y="9.8" width="2.8" height="2" fill="#fff"/></svg>
<div class="t" id="t32" style="left:40.2px;top:549.72px;font-size:11.2px;color:#3c4b66;font-weight:normal;letter-spacing:0.000px;;transform:scaleX(0.9598);transform-origin:0 0">Products_Above_Average_Pric...</div>
<svg style="position:absolute;left:22.3px;top:571.0999999999999px" width="13" height="13" viewBox="0 0 13 13"><rect x="0" y="0" width="13" height="13" rx="1.5" fill="#c2d3ef"/><rect x="0" y="0" width="13" height="3" rx="1" fill="#a9c0e6"/><rect x="1.2" y="4.0" width="2.8" height="2" fill="#fff"/><rect x="1.2" y="6.9" width="2.8" height="2" fill="#fff"/><rect x="1.2" y="9.8" width="2.8" height="2" fill="#fff"/><rect x="5.0" y="4.0" width="2.8" height="2" fill="#fff"/><rect x="5.0" y="6.9" width="2.8" height="2" fill="#fff"/><rect x="5.0" y="9.8" width="2.8" height="2" fill="#fff"/><rect x="8.799999999999999" y="4.0" width="2.8" height="2" fill="#fff"/><rect x="8.799999999999999" y="6.9" width="2.8" height="2" fill="#fff"/><rect x="8.799999999999999" y="9.8" width="2.8" height="2" fill="#fff"/></svg>
<div class="t" id="t33" style="left:40.2px;top:572.12px;font-size:11.2px;color:#3c4b66;font-weight:normal;letter-spacing:0.000px;;transform:scaleX(0.9664);transform-origin:0 0">Products_by_Categories</div>
<div style="position:absolute;left:235px;top:185.7px;width:5.30px;height:403.00px;background:#ebebeb"></div>
<div style="position:absolute;left:235px;top:185.7px;width:5.30px;height:279.30px;background:#cccccc"></div>
<div class="t" id="t34" style="left:265.9px;top:131.12px;font-size:11.2px;color:#3c4b66;font-weight:bold;letter-spacing:0.000px;;transform:scaleX(0.8985);transform-origin:0 0">Result Fields</div>
<svg style="position:absolute;left:265.2px;top:144.0px" width="465.59999999999997" height="56.000000000000014" viewBox="0 0 465.59999999999997 56.000000000000014"><rect x="0.5" y="0.5" width="464.60" height="55.00" fill="none" stroke="#a2b0c7" stroke-width="1" stroke-dasharray="2 2"/></svg>
<div style="position:absolute;left:270.3px;top:149.5px;width:137.40px;height:19.60px;background:#fff;border:1px solid #d4ddec;box-sizing:border-box"></div>
<svg style="position:absolute;left:275.3px;top:154.10000000000002px" width="10.7" height="10.5" viewBox="0 0 10.7 10.5"><rect x="0.5" y="0.5" width="9.7" height="9.7" rx="1.3" fill="none" stroke="#d6dfee" stroke-width="1"/><path d="M3.2 8.2 L5.35 2.4 L7.5 8.2 M3.9 6.4 H6.8" fill="none" stroke="#b5c7e6" stroke-width="1.1"/></svg>
<div class="t" id="t35" style="left:289.0px;top:153.82px;font-size:11.2px;color:#3c4b66;font-weight:normal;letter-spacing:0.000px;;transform:scaleX(0.9109);transform-origin:0 0">Category.CategoryName</div>
<div style="position:absolute;left:414.3px;top:149.5px;width:122.20px;height:19.60px;background:#fff;border:1px solid #d4ddec;box-sizing:border-box"></div>
<svg style="position:absolute;left:419.3px;top:154.10000000000002px" width="10.7" height="10.5" viewBox="0 0 10.7 10.5"><rect x="0.5" y="0.5" width="9.7" height="9.7" rx="1.3" fill="none" stroke="#d6dfee" stroke-width="1"/><path d="M3.2 8.2 L5.35 2.4 L7.5 8.2 M3.9 6.4 H6.8" fill="none" stroke="#b5c7e6" stroke-width="1.1"/></svg>
<div class="t" id="t36" style="left:433.0px;top:153.82px;font-size:11.2px;color:#3c4b66;font-weight:normal;letter-spacing:0.000px;;transform:scaleX(0.9337);transform-origin:0 0">Category.Description</div>
<div style="position:absolute;left:543.4px;top:149.5px;width:130.80px;height:19.60px;background:#fff;border:1px solid #d4ddec;box-sizing:border-box"></div>
<svg style="position:absolute;left:548.4px;top:154.10000000000002px" width="10.7" height="10.5" viewBox="0 0 10.7 10.5"><rect x="0.5" y="0.5" width="9.7" height="9.7" rx="1.3" fill="none" stroke="#d6dfee" stroke-width="1"/><path d="M3.2 8.2 L5.35 2.4 L7.5 8.2 M3.9 6.4 H6.8" fill="none" stroke="#b5c7e6" stroke-width="1.1"/></svg>
<div class="t" id="t37" style="left:562.1px;top:153.82px;font-size:11.2px;color:#3c4b66;font-weight:normal;letter-spacing:0.000px;;transform:scaleX(0.9111);transform-origin:0 0">Products.ProductName</div>
<div style="position:absolute;left:270.3px;top:175.3px;width:110.50px;height:19.20px;background:#fff;border:1px solid #d4ddec;box-sizing:border-box"></div>
<svg style="position:absolute;left:275.3px;top:179.70000000000002px" width="10.7" height="10.5" viewBox="0 0 10.7 10.5"><rect x="0.5" y="0.5" width="9.7" height="9.7" rx="1.3" fill="none" stroke="#d6dfee" stroke-width="1"/><path d="M4.6 2.8 L4 7.8 M6.7 2.8 L6.1 7.8 M3.2 4.5 H7.6 M3 6.2 H7.4" fill="none" stroke="#b5c7e6" stroke-width="0.9"/></svg>
<div class="t" id="t38" style="left:289.0px;top:179.62px;font-size:11.2px;color:#3c4b66;font-weight:normal;letter-spacing:0.000px;;transform:scaleX(0.9181);transform-origin:0 0">Products.UnitPrice</div>
<div style="position:absolute;left:387.5px;top:175.3px;width:126.00px;height:19.20px;background:#fff;border:1px solid #d4ddec;box-sizing:border-box"></div>
<svg style="position:absolute;left:392.5px;top:179.70000000000002px" width="10.7" height="10.5" viewBox="0 0 10.7 10.5"><rect x="0.5" y="0.5" width="9.7" height="9.7" rx="1.3" fill="none" stroke="#d6dfee" stroke-width="1"/><path d="M4.6 2.8 L4 7.8 M6.7 2.8 L6.1 7.8 M3.2 4.5 H7.6 M3 6.2 H7.4" fill="none" stroke="#b5c7e6" stroke-width="0.9"/></svg>
<div class="t" id="t39" style="left:406.2px;top:179.62px;font-size:11.2px;color:#3c4b66;font-weight:normal;letter-spacing:0.000px;;transform:scaleX(0.9138);transform-origin:0 0">Products.UnitsInStock</div>
<div class="t" id="t40" style="left:266.1px;top:214.42px;font-size:11.2px;color:#3c4b66;font-weight:bold;letter-spacing:0.000px;;transform:scaleX(0.9195);transform-origin:0 0">Filters</div>
<svg style="position:absolute;left:265.2px;top:227.0px" width="465.59999999999997" height="52.39999999999999" viewBox="0 0 465.59999999999997 52.39999999999999"><rect x="0.5" y="0.5" width="464.60" height="51.40" fill="none" stroke="#a2b0c7" stroke-width="1" stroke-dasharray="2 2"/></svg>
<div style="position:absolute;left:265.2px;top:232.9px;width:26.90px;height:15.90px;background:#55688b"></div>
<div style="position:absolute;left:265.2px;top:232.9px;width:1.40px;height:46.50px;background:#55688b"></div>
<div class="t" id="t41" style="left:272.6px;top:235.32px;font-size:11.2px;color:#fff;font-weight:normal;letter-spacing:0.000px;;transform:scaleX(1.0223);transform-origin:0 0">All</div>
<div style="position:absolute;left:270.6px;top:252.3px;width:166.00px;height:18.80px;background:#fff;border:1px solid #d4ddec;box-sizing:border-box"></div>
<svg style="position:absolute;left:275.6px;top:256.5px" width="10.7" height="10.5" viewBox="0 0 10.7 10.5"><rect x="0.5" y="0.5" width="9.7" height="9.7" rx="1.3" fill="none" stroke="#d6dfee" stroke-width="1"/><path d="M5.35 0.5 V10.2" stroke="#d6dfee" stroke-width="1"/></svg>
<div class="t" id="t42" style="left:290.5px;top:256.62px;font-size:11.2px;color:#3c4b66;font-weight:normal;letter-spacing:0.000px;;transform:scaleX(0.9252);transform-origin:0 0">Products.Discontinued</div>
<div class="t" id="t43" style="left:395.6px;top:256.62px;font-size:11.2px;color:#3b86f5;font-weight:normal;letter-spacing:0.000px;;transform:scaleX(0.9263);transform-origin:0 0">equal to</div>
<div class="t" id="t44" style="left:265.7px;top:294.42px;font-size:11.2px;color:#3c4b66;font-weight:bold;letter-spacing:0.000px;;transform:scaleX(0.9094);transform-origin:0 0">Sort Fields</div>
<svg style="position:absolute;left:265.2px;top:307.0px" width="465.59999999999997" height="30.300000000000022" viewBox="0 0 465.59999999999997 30.300000000000022"><rect x="0.5" y="0.5" width="464.60" height="29.30" fill="none" stroke="#a2b0c7" stroke-width="1" stroke-dasharray="2 2"/></svg>
<div style="position:absolute;left:270.2px;top:312.9px;width:150.80px;height:19.30px;background:#fff;border:1px solid #5e9af5;box-sizing:border-box"></div>
<svg style="position:absolute;left:275.2px;top:317.34999999999997px" width="10.7" height="10.5" viewBox="0 0 10.7 10.5"><rect x="0.5" y="0.5" width="9.7" height="9.7" rx="1.3" fill="none" stroke="#d6dfee" stroke-width="1"/><path d="M3.2 8.2 L5.35 2.4 L7.5 8.2 M3.9 6.4 H6.8" fill="none" stroke="#b5c7e6" stroke-width="1.1"/></svg>
<div class="t" id="t45" style="left:288.9px;top:317.22px;font-size:11.2px;color:#3c4b66;font-weight:normal;letter-spacing:0.000px;;transform:scaleX(0.9109);transform-origin:0 0">Category.CategoryName</div>
<svg style="position:absolute;left:404px;top:316px" width="12" height="12" viewBox="0 0 12 12"><path d="M0.6 3.7 L3.1 0.9 L5.6 3.7 Z" fill="#b9cbe8"/><path d="M3.1 3 V10.8" stroke="#b9cbe8" stroke-width="1.6"/><path d="M5.1 5.3 H6.6 M5.1 7.3 H8.6 M5.1 9.3 H11.6" stroke="#cfdcef" stroke-width="0.9"/></svg>
<div style="position:absolute;left:755.1px;top:128.7px;width:256.10px;height:251.00px;background:#fff"></div>
<div class="t" id="t46" style="left:770.1px;top:139.72px;font-size:11.2px;color:#3c4b66;font-weight:normal;letter-spacing:0.000px;;transform:scaleX(0.9068);transform-origin:0 0">Category.CategoryName</div>
<div style="position:absolute;left:755.1px;top:160.5px;width:256.10px;height:1.40px;background:#dde5f2"></div>
<div style="position:absolute;left:961.6px;top:139.2px;width:16.2px;height:10.8px;border-radius:5.4px;background:#b3c7e7"></div><div style="position:absolute;left:967.8px;top:140.5px;width:8.2px;height:8.2px;border-radius:50%;background:#fff"></div>
<svg style="position:absolute;left:983px;top:137.5px" width="12" height="15" viewBox="0 0 12 15"><g fill="none" stroke="#a9bfe3" stroke-linejoin="round"><rect x="0.9" y="2.4" width="9.4" height="3" rx="0.6" stroke-width="1.4"/><path d="M3.9 2.4 V0.9 H7.3 V2.4" stroke-width="1.2"/><path d="M2 5.4 V12 Q2 13.2 3.2 13.2 H8 Q9.2 13.2 9.2 12 V5.4" stroke-width="1.4"/><path d="M4.4 6.8 V11.4 M6.8 6.8 V11.4" stroke-width="1"/></g></svg>
<div style="position:absolute;left:771px;top:177.2px;width:12.8px;height:12.8px;border-radius:50%;border:1.5px solid #3b86f5;box-sizing:border-box"></div><div style="position:absolute;left:774px;top:180.2px;width:6.8px;height:6.8px;border-radius:50%;background:#3b86f5"></div>
<div class="t" id="t47" style="left:790.5px;top:178.50px;font-size:10.4px;color:#3c4b66;font-weight:normal;letter-spacing:0.000px;;transform:scaleX(0.9249);transform-origin:0 0">ASC</div>
<div style="position:absolute;left:771px;top:196.1px;width:12.8px;height:12.8px;border-radius:50%;border:1.4px solid #b7c9e6;box-sizing:border-box"></div>
<div class="t" id="t48" style="left:790.5px;top:197.40px;font-size:10.4px;color:#3c4b66;font-weight:normal;letter-spacing:0.000px;;transform:scaleX(0.9201);transform-origin:0 0">DESC</div>
<div style="position:absolute;left:240px;top:392.3px;width:784.00px;height:4.90px;background:#fff"></div>
<div style="position:absolute;left:635px;top:394px;width:2.00px;height:2.00px;background:#a3b1c8;border-radius:1px"></div>
<div style="position:absolute;left:640px;top:394px;width:2.00px;height:2.00px;background:#a3b1c8;border-radius:1px"></div>
<div style="position:absolute;left:645px;top:394px;width:2.00px;height:2.00px;background:#a3b1c8;border-radius:1px"></div>
<svg style="position:absolute;left:249.2px;top:408.3px" width="7.4" height="5.3" viewBox="0 0 7.4 5.3"><path d="M0.6 0.6 L3.7 4.3 L6.800000000000001 0.6" fill="none" stroke="#a9bcdc" stroke-width="1.1"/></svg>
<div class="t" id="t49" style="left:266px;top:404.42px;font-size:11.2px;color:#3c4b66;font-weight:bold;letter-spacing:0.000px;;transform:scaleX(0.9052);transform-origin:0 0">Result</div>
<svg style="position:absolute;left:904.2px;top:405px" width="11" height="14" viewBox="0 0 11 14"><path d="M5.5 0.5 V10 M2 6.5 L5.5 10 L9 6.5 M0.6 9 V13 H10.4 V9" fill="none" stroke="#b4c6e5" stroke-width="1.1"/></svg>
<div class="t" id="t50" style="left:916.7px;top:408.22px;font-size:11.2px;color:#8b95a7;font-weight:normal;letter-spacing:0.000px;;transform:scaleX(0.9699);transform-origin:0 0">PDF</div>
<svg style="position:absolute;left:956px;top:405px" width="11" height="14" viewBox="0 0 11 14"><path d="M5.5 0.5 V10 M2 6.5 L5.5 10 L9 6.5 M0.6 9 V13 H10.4 V9" fill="none" stroke="#b4c6e5" stroke-width="1.1"/></svg>
<div class="t" id="t51" style="left:968.5px;top:408.22px;font-size:11.2px;color:#8b95a7;font-weight:normal;letter-spacing:0.000px;;transform:scaleX(0.9286);transform-origin:0 0">CSV</div>
<div style="position:absolute;left:265.7px;top:422.8px;width:584.90px;height:27.50px;background:#dfe6f2"></div>
<div style="position:absolute;left:265.7px;top:450.3px;width:584.90px;height:27.10px;background:#fff"></div>
<div style="position:absolute;left:265.7px;top:477.4px;width:584.90px;height:27.50px;background:#f5f7fb"></div>
<div style="position:absolute;left:265.7px;top:504.9px;width:584.90px;height:27.50px;background:#fff"></div>
<div style="position:absolute;left:265.7px;top:532.4px;width:584.90px;height:27.20px;background:#f5f7fb"></div>
<div style="position:absolute;left:265.7px;top:559.6px;width:584.90px;height:27.30px;background:#fff"></div>
<div style="position:absolute;left:265.7px;top:476.79999999999995px;width:584.90px;height:1.20px;background:#dbe3f0"></div>
<div style="position:absolute;left:265.7px;top:504.29999999999995px;width:584.90px;height:1.20px;background:#dbe3f0"></div>
<div style="position:absolute;left:265.7px;top:531.8px;width:584.90px;height:1.20px;background:#dbe3f0"></div>
<div style="position:absolute;left:265.7px;top:559.0px;width:584.90px;height:1.20px;background:#dbe3f0"></div>
<div style="position:absolute;left:265.7px;top:586.3px;width:584.90px;height:1.20px;background:#dbe3f0"></div>
<div style="position:absolute;left:361.20000000000005px;top:422.8px;width:2.20px;height:27.50px;background:#fff"></div>
<div style="position:absolute;left:361.8px;top:450.3px;width:1.10px;height:136.60px;background:#dbe3f0"></div>
<div style="position:absolute;left:524.4px;top:422.8px;width:2.20px;height:27.50px;background:#fff"></div>
<div style="position:absolute;left:525.0px;top:450.3px;width:1.10px;height:136.60px;background:#dbe3f0"></div>
<div style="position:absolute;left:688.3000000000001px;top:422.8px;width:2.20px;height:27.50px;background:#fff"></div>
<div style="position:absolute;left:688.9000000000001px;top:450.3px;width:1.10px;height:136.60px;background:#dbe3f0"></div>
<div style="position:absolute;left:762.1px;top:422.8px;width:2.20px;height:27.50px;background:#fff"></div>
<div style="position:absolute;left:762.7px;top:450.3px;width:1.10px;height:136.60px;background:#dbe3f0"></div>
<div style="position:absolute;left:265.2px;top:450.3px;width:1.00px;height:136.70px;background:#dbe3f0"></div>
<div class="t" id="t52" style="left:271.8px;top:432.80px;font-size:10.4px;color:#56647c;font-weight:normal;letter-spacing:0.000px;;transform:scaleX(0.9138);transform-origin:0 0">CategoryName</div>
<div class="t" id="t53" style="left:369.7px;top:432.80px;font-size:10.4px;color:#56647c;font-weight:normal;letter-spacing:0.000px;;transform:scaleX(0.9385);transform-origin:0 0">Description</div>
<div class="t" id="t54" style="left:533.3px;top:432.80px;font-size:10.4px;color:#56647c;font-weight:normal;letter-spacing:0.000px;;transform:scaleX(0.9061);transform-origin:0 0">ProductName</div>
<div class="t" id="t55" style="left:696.4px;top:432.80px;font-size:10.4px;color:#56647c;font-weight:normal;letter-spacing:0.000px;;transform:scaleX(0.9246);transform-origin:0 0">UnitPrice</div>
<div class="t" id="t56" style="left:769.7px;top:432.80px;font-size:10.4px;color:#56647c;font-weight:normal;letter-spacing:0.000px;;transform:scaleX(0.9100);transform-origin:0 0">UnitsInStock</div>
<div class="t" id="t57" style="left:272.9px;top:460.20px;font-size:10.4px;color:#3c4b66;font-weight:normal;letter-spacing:0.000px;;transform:scaleX(0.8767);transform-origin:0 0">Beverages</div>
<div class="t" id="t58" style="left:370.8px;top:460.20px;font-size:10.4px;color:#3c4b66;font-weight:normal;letter-spacing:0.000px;;transform:scaleX(0.8890);transform-origin:0 0">Soft drinks, coffees, teas, beers, ...</div>
<div class="t" id="t59" style="left:533.8px;top:460.20px;font-size:10.4px;color:#3c4b66;font-weight:normal;letter-spacing:0.000px;;transform:scaleX(0.8965);transform-origin:0 0">Chai</div>
<div class="t" id="t60" style="left:696.9px;top:460.20px;font-size:10.4px;color:#3c4b66;font-weight:normal;letter-spacing:0.000px;;transform:scaleX(0.9952);transform-origin:0 0">18</div>
<div class="t" id="t61" style="left:770.4px;top:460.20px;font-size:10.4px;color:#3c4b66;font-weight:normal;letter-spacing:0.000px;;transform:scaleX(0.9952);transform-origin:0 0">39</div>
<div class="t" id="t62" style="left:272.9px;top:487.30px;font-size:10.4px;color:#3c4b66;font-weight:normal;letter-spacing:0.000px;;transform:scaleX(0.8767);transform-origin:0 0">Beverages</div>
<div class="t" id="t63" style="left:370.8px;top:487.30px;font-size:10.4px;color:#3c4b66;font-weight:normal;letter-spacing:0.000px;;transform:scaleX(0.8890);transform-origin:0 0">Soft drinks, coffees, teas, beers, ...</div>
<div class="t" id="t64" style="left:533.8px;top:487.30px;font-size:10.4px;color:#3c4b66;font-weight:normal;letter-spacing:0.000px;;transform:scaleX(0.8802);transform-origin:0 0">Chang</div>
<div class="t" id="t65" style="left:696.9px;top:487.30px;font-size:10.4px;color:#3c4b66;font-weight:normal;letter-spacing:0.000px;;transform:scaleX(0.9952);transform-origin:0 0">19</div>
<div class="t" id="t66" style="left:770.4px;top:487.30px;font-size:10.4px;color:#3c4b66;font-weight:normal;letter-spacing:0.000px;;transform:scaleX(0.9952);transform-origin:0 0">17</div>
<div class="t" id="t67" style="left:272.9px;top:514.80px;font-size:10.4px;color:#3c4b66;font-weight:normal;letter-spacing:0.000px;;transform:scaleX(0.9138);transform-origin:0 0">Condiments</div>
<div class="t" id="t68" style="left:370.8px;top:514.80px;font-size:10.4px;color:#3c4b66;font-weight:normal;letter-spacing:0.000px;;transform:scaleX(0.8807);transform-origin:0 0">Sweet and savory sauces, relishe...</div>
<div class="t" id="t69" style="left:533.8px;top:514.80px;font-size:10.4px;color:#3c4b66;font-weight:normal;letter-spacing:0.000px;;transform:scaleX(0.8975);transform-origin:0 0">Aniseed Syrup</div>
<div class="t" id="t70" style="left:696.9px;top:514.80px;font-size:10.4px;color:#3c4b66;font-weight:normal;letter-spacing:0.000px;;transform:scaleX(0.9952);transform-origin:0 0">10</div>
<div class="t" id="t71" style="left:770.4px;top:514.80px;font-size:10.4px;color:#3c4b66;font-weight:normal;letter-spacing:0.000px;;transform:scaleX(0.9952);transform-origin:0 0">13</div>
<div class="t" id="t72" style="left:272.9px;top:542.30px;font-size:10.4px;color:#3c4b66;font-weight:normal;letter-spacing:0.000px;;transform:scaleX(0.9138);transform-origin:0 0">Condiments</div>
<div class="t" id="t73" style="left:370.8px;top:542.30px;font-size:10.4px;color:#3c4b66;font-weight:normal;letter-spacing:0.000px;;transform:scaleX(0.8807);transform-origin:0 0">Sweet and savory sauces, relishe...</div>
<div class="t" id="t74" style="left:533.8px;top:542.30px;font-size:10.4px;color:#3c4b66;font-weight:normal;letter-spacing:0.000px;;transform:scaleX(0.8972);transform-origin:0 0">Chef Anton's Cajun Seasoning</div>
<div class="t" id="t75" style="left:696.9px;top:542.30px;font-size:10.4px;color:#3c4b66;font-weight:normal;letter-spacing:0.000px;;transform:scaleX(0.9952);transform-origin:0 0">22</div>
<div class="t" id="t76" style="left:770.4px;top:542.30px;font-size:10.4px;color:#3c4b66;font-weight:normal;letter-spacing:0.000px;;transform:scaleX(0.9952);transform-origin:0 0">53</div>
<div class="t" id="t77" style="left:272.9px;top:569.50px;font-size:10.4px;color:#3c4b66;font-weight:normal;letter-spacing:0.000px;;transform:scaleX(0.9138);transform-origin:0 0">Condiments</div>
<div class="t" id="t78" style="left:370.8px;top:569.50px;font-size:10.4px;color:#3c4b66;font-weight:normal;letter-spacing:0.000px;;transform:scaleX(0.8807);transform-origin:0 0">Sweet and savory sauces, relishe...</div>
<div class="t" id="t79" style="left:533.8px;top:569.50px;font-size:10.4px;color:#3c4b66;font-weight:normal;letter-spacing:0.000px;;transform:scaleX(0.8889);transform-origin:0 0">Grandma's Boysenberry Spread</div>
<div class="t" id="t80" style="left:696.9px;top:569.50px;font-size:10.4px;color:#3c4b66;font-weight:normal;letter-spacing:0.000px;;transform:scaleX(0.9952);transform-origin:0 0">25</div>
<div class="t" id="t81" style="left:770.4px;top:569.50px;font-size:10.4px;color:#3c4b66;font-weight:normal;letter-spacing:0.000px;;transform:scaleX(0.9803);transform-origin:0 0">120</div>
<div style="position:absolute;left:993.2px;top:449.8px;width:5.10px;height:138.80px;background:#ebebeb"></div>
<div style="position:absolute;left:993.2px;top:449.8px;width:5.10px;height:35.90px;background:#cccccc"></div>
<div style="position:absolute;left:265.7px;top:587.5px;width:732.60px;height:1.00px;background:#dbe3f0"></div>
<div style="position:absolute;left:372.3px;top:593px;width:1.20px;height:4.00px;background:#c9d5ea"></div>
<div style="position:absolute;left:469.5px;top:593px;width:1.20px;height:4.00px;background:#c9d5ea"></div>
<div style="position:absolute;left:389.2px;top:595.6px;width:11.70px;height:1.40px;background:#b4c4e0"></div>
</body></html>
